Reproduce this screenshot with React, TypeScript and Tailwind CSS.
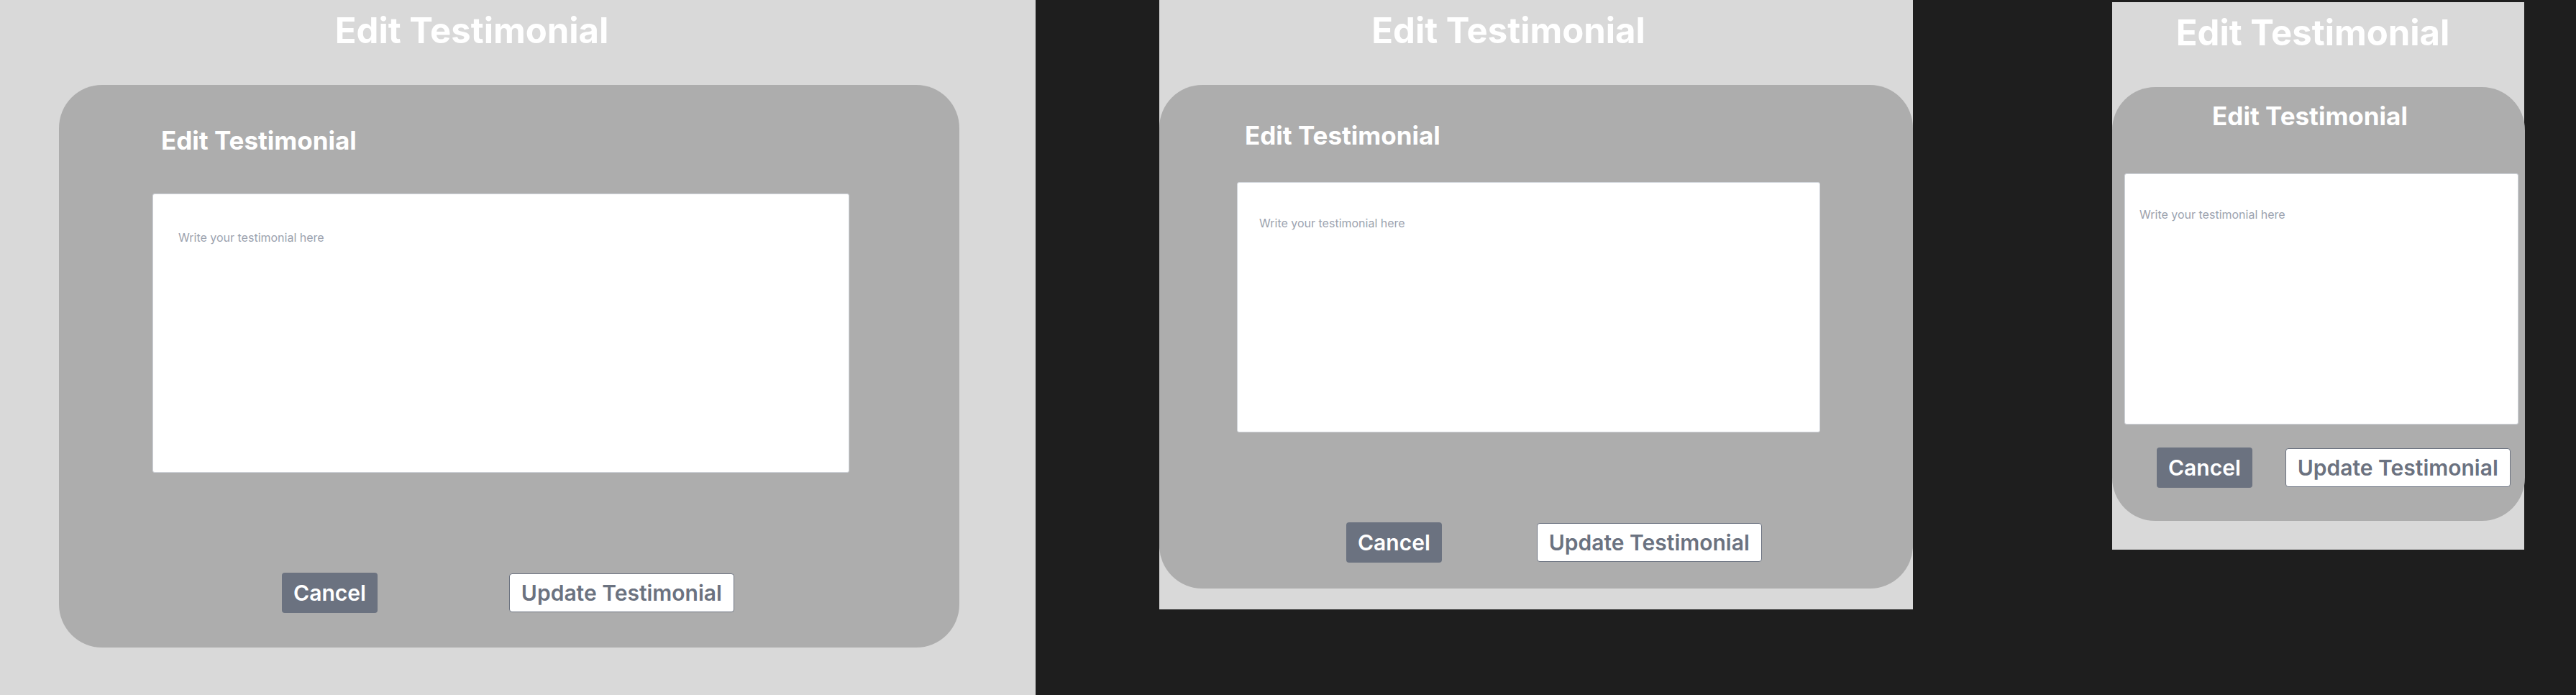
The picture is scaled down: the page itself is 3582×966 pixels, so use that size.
import React from "react";

const font = { fontFamily: "Inter, 'Noto Sans', sans-serif" };

function Buttons({ className }: { className: string }) {
  return (
    <div className={`flex items-center ${className}`}>
      <button className="rounded bg-[#6b7280] px-4 py-[10px] text-3xl font-semibold leading-9 text-white">
        Cancel
      </button>
      <button className="rounded border border-[#6b7280] bg-white px-4 py-2 text-3xl font-semibold leading-9 text-[#6b7280]">
        Update Testimonial
      </button>
    </div>
  );
}

export default function App() {
  return (
    <div className="flex h-[966px] w-[3582px] items-start bg-[#1e1e1e]" style={font}>
      {/* Desktop */}
      <div className="flex h-[966px] w-[1440px] shrink-0 flex-col bg-[#d9d9d9]">
        <h1 className="w-[1312px] pt-[18px] text-center text-[49px] font-bold leading-none text-white">
          Edit Testimonial
        </h1>
        <div className="ml-[82px] mt-[51px] flex h-[782px] w-[1252px] flex-col rounded-[60px] bg-[#adadad]">
          <h2 className="pl-[142px] pt-[60px] text-[35px] font-bold leading-none text-white">
            Edit Testimonial
          </h2>
          <textarea
            placeholder="Write your testimonial here"
            className="ml-[130px] mt-[56px] h-[388px] w-[969px] resize-none rounded-[3px] border border-[#d1d5db] bg-white pl-[35px] pt-[48px] text-base leading-6 placeholder:text-[#9ca3af]"
          />
          <Buttons className="mt-[139px] justify-center gap-[183px] pr-[3px]" />
        </div>
      </div>

      {/* Tablet */}
      <div className="ml-[172px] flex h-[847px] w-[1048px] shrink-0 flex-col bg-[#d9d9d9]">
        <h1 className="w-[971px] pt-[18px] text-center text-[49px] font-bold leading-none text-white">
          Edit Testimonial
        </h1>
        <div className="mt-[51px] flex h-[700px] w-full flex-col rounded-[60px] bg-[#adadad]">
          <h2 className="pl-[119px] pt-[53px] text-[35px] font-bold leading-none text-white">
            Edit Testimonial
          </h2>
          <textarea
            placeholder="Write your testimonial here"
            className="ml-[108px] mt-[47px] h-[348px] w-[811px] resize-none rounded-[3px] border border-[#d1d5db] bg-white pl-[30px] pt-[44px] text-base leading-6 placeholder:text-[#9ca3af]"
          />
          <Buttons className="mt-[125px] gap-[132px] pl-[260px]" />
        </div>
      </div>

      {/* Mobile */}
      <div className="ml-[277px] mt-[3px] flex h-[761px] w-[573px] shrink-0 flex-col bg-[#d9d9d9]">
        <h1 className="w-[558px] pt-[18px] text-center text-[49px] font-bold leading-none text-white">
          Edit Testimonial
        </h1>
        <div className="mt-[51px] flex h-[603px] w-[574px] flex-col rounded-[60px] bg-[#adadad]">
          <h2 className="pr-[24px] pt-[23px] text-center text-[35px] font-bold leading-none text-white">
            Edit Testimonial
          </h2>
          <textarea
            placeholder="Write your testimonial here"
            className="ml-[17px] mt-[62px] h-[349px] w-[548px] resize-none rounded-[3px] border border-[#d1d5db] bg-white pl-[20px] pt-[44px] text-base leading-6 placeholder:text-[#9ca3af]"
          />
          <Buttons className="mt-[32px] gap-[46px] pl-[62px]" />
        </div>
      </div>
    </div>
  );
}
